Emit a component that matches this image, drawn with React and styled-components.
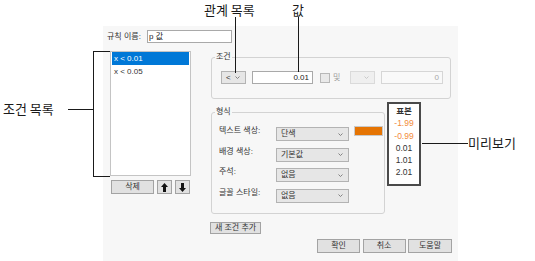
import React from "react";
import styled, { createGlobalStyle } from "styled-components";

const GlobalStyle = createGlobalStyle`
  html, body {
    margin: 0;
    padding: 0;
    background: #ffffff;
  }
  body {
    font-family: "Liberation Sans", "Noto Sans CJK KR", sans-serif;
  }
  * {
    box-sizing: border-box;
  }
`;

const Page = styled.div`
  position: relative;
  width: 535px;
  height: 261px;
  padding-top: 26px;
  overflow: hidden;
  background: #ffffff;
`;

const Dialog = styled.div`
  display: flex;
  flex-direction: column;
  width: 355px;
  height: 235px;
  margin-left: 103px;
  padding: 4px 6px 0 4px;
  background: #f7f7f7;
  font-size: 8px;
  color: #333333;
`;

const NameRow = styled.div`
  display: flex;
  align-items: center;
  height: 13px;
`;

const NameLabel = styled.span`
  width: 40px;
  line-height: 13px;
  white-space: nowrap;
`;

const TextBox = styled.div`
  display: flex;
  align-items: center;
  justify-content: ${p => (p.$right ? "flex-end" : "flex-start")};
  width: ${p => p.$w}px;
  height: 13px;
  padding: 0 3px 0 1px;
  background: ${p => (p.$disabled ? "#f9f9f9" : "#ffffff")};
  border: 1px solid ${p => (p.$disabled ? "#d6d6d6" : "#a9a9a9")};
  color: ${p => (p.$disabled ? "#a8a8a8" : "#222222")};
  margin-left: ${p => p.$ml || 0}px;
  line-height: 11px;
  white-space: nowrap;
`;

const Body = styled.div`
  display: flex;
  margin-top: 8px;
`;

const LeftCol = styled.div`
  display: flex;
  flex-direction: column;
  width: 81px;
  margin-left: 3px;
`;

const ListBox = styled.div`
  height: 125px;
  padding: 0 1px;
  background: #ffffff;
  border: 1px solid #c4c4c4;
`;

const ListItem = styled.div`
  height: 13px;
  line-height: 13px;
  padding-left: 2px;
  background: ${p => (p.$selected ? "#0078d7" : "transparent")};
  color: ${p => (p.$selected ? "#ffffff" : "#333333")};
`;

const ListButtons = styled.div`
  display: flex;
  gap: 3px;
  margin-top: 4px;
  margin-left: 1px;
`;

const Button = styled.div`
  display: flex;
  align-items: center;
  justify-content: center;
  width: ${p => p.$w}px;
  height: ${p => p.$h || 14}px;
  background: #e1e1e1;
  border: 1px solid #a3a3a3;
  color: #333333;
  line-height: 10px;
  white-space: nowrap;
`;

const RightCol = styled.div`
  display: flex;
  flex-direction: column;
  margin-left: 19px;
`;

const GroupBox = styled.div`
  position: relative;
  width: ${p => p.$w}px;
  height: ${p => p.$h}px;
  margin-left: 1px;
  margin-top: ${p => p.$mt || 0}px;
  border: 1px solid #d3d3d3;
  border-radius: 3px;
`;

const GroupTitle = styled.span`
  position: absolute;
  top: -6px;
  left: 3px;
  padding: 0 1px;
  background: #f7f7f7;
  line-height: 10px;
`;

const ConditionRow = styled.div`
  display: flex;
  align-items: center;
  padding: 13px 0 0 9px;
`;

const Select = styled.div`
  display: flex;
  align-items: center;
  justify-content: space-between;
  width: ${p => p.$w}px;
  height: ${p => p.$h || 13}px;
  margin-left: ${p => p.$ml || 0}px;
  padding: 0 5px 0 4px;
  background: ${p => (p.$disabled ? "#efefef" : "#e6e6e6")};
  border: 1px solid ${p => (p.$disabled ? "#dadada" : "#b3b3b3")};
  color: #333333;
  line-height: 10px;
  white-space: nowrap;
`;

const CheckBox = styled.div`
  width: 10px;
  height: 10px;
  margin-left: 7px;
  background: #e9e9e9;
  border: 1px solid #b8b8b8;
`;

const AndLabel = styled.span`
  width: 10px;
  margin-left: 3px;
  color: #a0a0a0;
  line-height: 10px;
`;

const FormatRowWrap = styled.div`
  display: flex;
  align-items: flex-start;
  margin-top: 3px;
`;

const FormatGrid = styled.div`
  display: grid;
  grid-template-columns: 52px 73px 29px;
  grid-auto-rows: 14px;
  row-gap: 6.5px;
  column-gap: 5px;
  align-items: start;
  padding: 14px 0 0 7px;
`;

const FieldLabel = styled.span`
  line-height: 10px;
  margin-top: -1px;
  white-space: nowrap;
`;

const Swatch = styled.div`
  width: 29px;
  height: 10px;
  margin-top: -1px;
  background: #e57403;
  border: 1px solid #c9c9c9;
`;

const Preview = styled.div`
  display: flex;
  flex-direction: column;
  align-items: center;
  width: 34px;
  height: 84px;
  margin-left: 2px;
  padding-top: 1px;
  background: #ffffff;
  border: 2px solid #4a4a4a;
  font-size: 8.5px;
  line-height: 12.3px;
`;

const PreviewValue = styled.span`
  color: ${p => (p.$neg ? "#f28c3c" : "#333333")};
  font-weight: ${p => (p.$head ? 700 : 400)};
`;

const AddRow = styled.div`
  margin-top: 8px;
`;

const Footer = styled.div`
  display: flex;
  justify-content: flex-end;
  gap: 2.5px;
  margin-top: 5px;
`;

const CalloutText = styled.span`
  position: absolute;
  left: ${p => p.$x}px;
  top: ${p => p.$y}px;
  font-family: "Noto Sans CJK KR", sans-serif;
  font-size: 13px;
  line-height: 17px;
  color: #1a1a1a;
  white-space: nowrap;
`;

const CalloutLine = styled.span`
  position: absolute;
  left: ${p => p.$x}px;
  top: ${p => p.$y}px;
  width: ${p => p.$w}px;
  height: ${p => p.$h}px;
  background: #1a1a1a;
`;

const Bracket = styled.span`
  position: absolute;
  left: 93px;
  top: 51px;
  width: 17px;
  height: 126px;
  border: 1px solid #1a1a1a;
  border-right: none;
`;

const Chevron = ({ light }) => (
  <svg width="5" height="3" viewBox="0 0 5 3">
    <path d="M0.5 0.5 L2.5 2.5 L4.5 0.5" fill="none" stroke={light ? "#c4c4c4" : "#777777"} strokeWidth="0.9" />
  </svg>
);

const Arrow = ({ down }) => (
  <svg width="7" height="9" viewBox="0 0 7 9" style={down ? { transform: "rotate(180deg)" } : undefined}>
    <path d="M3.5 0 L7 4 L5 4 L5 9 L2 9 L2 4 L0 4 Z" fill="#111111" />
  </svg>
);

const formatRows = [
  { label: "텍스트 색상:", value: "단색", swatch: true },
  { label: "배경 색상:", value: "기본값" },
  { label: "주석:", value: "없음" },
  { label: "글꼴 스타일:", value: "없음" },
];

const previewValues = ["-1.99", "-0.99", "0.01", "1.01", "2.01"];

const App = () => (
  <>
    <GlobalStyle />
    <Page>
      <Dialog>
        <NameRow>
          <NameLabel>규칙 이름:</NameLabel>
          <TextBox $w={85}>p 값</TextBox>
        </NameRow>

        <Body>
          <LeftCol>
            <ListBox>
              <ListItem $selected>x &lt; 0.01</ListItem>
              <ListItem>x &lt; 0.05</ListItem>
            </ListBox>
            <ListButtons>
              <Button $w={43}>삭제</Button>
              <Button $w={15}><Arrow /></Button>
              <Button $w={15}><Arrow down /></Button>
            </ListButtons>
          </LeftCol>

          <RightCol>
            <GroupBox $w={240} $h={42} $mt={6}>
              <GroupTitle>조건</GroupTitle>
              <ConditionRow>
                <Select $w={25}>&lt;<Chevron /></Select>
                <TextBox $w={61} $ml={6} $right>0.01</TextBox>
                <CheckBox />
                <AndLabel>및</AndLabel>
                <Select $w={25} $ml={7} $disabled><span /><Chevron light /></Select>
                <TextBox $w={62} $ml={6} $right $disabled>0</TextBox>
              </ConditionRow>
            </GroupBox>

            <FormatRowWrap>
              <GroupBox $w={174} $h={102} $mt={10}>
                <GroupTitle>형식</GroupTitle>
                <FormatGrid>
                  {formatRows.map(row => (
                    <React.Fragment key={row.label}>
                      <FieldLabel>{row.label}</FieldLabel>
                      <Select $w={73} $h={14}>{row.value}<Chevron /></Select>
                      {row.swatch ? <Swatch /> : <span />}
                    </React.Fragment>
                  ))}
                </FormatGrid>
              </GroupBox>
              <Preview>
                <PreviewValue $head>표본</PreviewValue>
                {previewValues.map(v => (
                  <PreviewValue key={v} $neg={v.startsWith("-")}>{v}</PreviewValue>
                ))}
              </Preview>
            </FormatRowWrap>

            <AddRow>
              <Button $w={51} $h={12}>새 조건 추가</Button>
            </AddRow>
          </RightCol>
        </Body>

        <Footer>
          <Button $w={43}>확인</Button>
          <Button $w={43}>취소</Button>
          <Button $w={44}>도움말</Button>
        </Footer>
      </Dialog>

      <CalloutText $x={3} $y={100}>조건 목록</CalloutText>
      <CalloutLine $x={68} $y={109} $w={25} $h={1} />
      <Bracket />

      <CalloutText $x={204} $y={1}>관계 목록</CalloutText>
      <CalloutLine $x={235} $y={17} $w={1} $h={56} />

      <CalloutText $x={292} $y={1}>값</CalloutText>
      <CalloutLine $x={298} $y={17} $w={1} $h={55} />

      <CalloutText $x={468} $y={134}>미리보기</CalloutText>
      <CalloutLine $x={422} $y={143} $w={46} $h={1} />
    </Page>
  </>
);

export default App;
